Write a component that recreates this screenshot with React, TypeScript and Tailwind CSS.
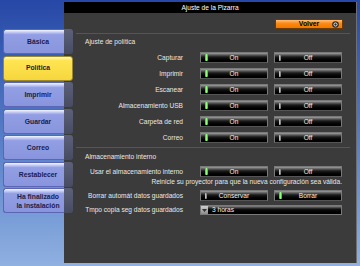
const font = { fontFamily: '"Liberation Sans", Arial, sans-serif' }

const menu = ['Básica', 'Política', 'Imprimir', 'Guardar', 'Correo', 'Restablecer']

function SideButton({ label, active }: { label: string; active?: boolean }) {
  if (active) {
    return (
      <div className="h-[25px] w-[70px] rounded-[3px] border border-[#9c8a2c] bg-linear-to-b from-[#fff8c0] via-[#ffe552] via-15% to-[#f6d63c] flex items-center justify-center text-[6.8px] font-bold text-[#1c1c3c] leading-[8px]">
        {label}
      </div>
    )
  }
  return (
    <div className="relative h-[25px] w-[70px] flex">
      <div className="w-[61px] rounded-l-[3px] border border-r-0 border-[#5a66b4] bg-linear-to-b from-[#f4f6ff] via-[#939fe4] via-20% to-[#8894dc]" />
      <div className="w-[9px] rounded-r-[3px] bg-linear-to-b from-[#5c607a] to-[#484c62]" />
      <div className="absolute inset-0 flex items-center justify-center text-center whitespace-pre-line text-[6.8px] font-bold text-[#1c1c4c] leading-[9px]">
        {label}
      </div>
    </div>
  )
}

function Toggle({ label, lit }: { label: string; lit?: boolean }) {
  return (
    <div className="relative h-[11px] w-[68px] border border-[#7a7a7a] border-b-[#555] bg-linear-to-b from-[#a0a0a0] via-[#1a1a1a] via-45% to-black flex items-center justify-center">
      {lit ? (
        <div className="absolute left-[4px] top-[1px] h-[7px] w-[3px] rounded-[1px] bg-linear-to-r from-[#2fbf2f] via-[#8dff7a] to-[#22b322]" />
      ) : (
        <div className="absolute left-[4px] top-[2px] h-[6px] w-[2px] rounded-[1px] bg-[#8a8a8a] border-l border-[#c0c0c0]" />
      )}
      <span className="text-[6.6px] leading-[8px] text-[#f0f0f0]">{label}</span>
    </div>
  )
}

function Row({ label, a, b, litA }: { label: string; a: string; b: string; litA: boolean }) {
  return (
    <div className="flex items-center h-[11px]">
      <div className="w-[107px] text-right text-[6.6px] leading-[8px] text-[#e8e8e8] whitespace-nowrap">{label}</div>
      <div className="ml-[17px] flex gap-[6px]">
        <Toggle label={a} lit={litA} />
        <Toggle label={b} lit={!litA} />
      </div>
    </div>
  )
}

export default function App() {
  const policies = ['Capturar', 'Imprimir', 'Escanear', 'Almacenamiento USB', 'Carpeta de red', 'Correo']

  return (
    <div style={font} className="w-[360px] h-[266px] flex pt-[2px] bg-linear-to-b from-[#2748a6] via-[#5f86cc] via-60% to-[#8fb0e0] overflow-hidden">
      {/* Sidebar */}
      <div className="relative z-10 w-[73px] shrink-0 pl-[3px] pt-[27px] flex flex-col gap-[1.5px]">
        {menu.map((m) => (
          <SideButton key={m} label={m} active={m === 'Política'} />
        ))}
        <SideButton label={'Ha finalizado\nla instalación'} />
      </div>

      {/* Main panel */}
      <div className="-ml-[9px] w-[293px] h-[261px] shrink-0 bg-[#3b3b3b] border-r border-[#707070] flex flex-col">
        <div className="h-[11px] bg-black flex items-center justify-center text-[6.6px] leading-[8px] text-white">
          Ajuste de la Pizarra
        </div>

        <div className="mt-[6px] flex justify-end pr-[13px]">
          <div className="relative h-[10px] w-[68px] border border-[#6a3a00] bg-linear-to-b from-[#ffc070] via-[#ff8a10] via-40% to-[#f07800] flex items-center justify-center">
            <span className="text-[6.8px] leading-[8px] font-bold text-black">Volver</span>
            <svg className="absolute right-[3px] top-[1px]" width="7" height="7" viewBox="0 0 7 7">
              <circle cx="3.5" cy="3.5" r="3.3" fill="#2a2a2a" />
              <circle cx="3.5" cy="3.5" r="1.6" fill="none" stroke="#e8e8e8" strokeWidth="1" />
            </svg>
          </div>
        </div>

        <div className="pl-[12px] pr-[6px] flex flex-col">
          <div className="mt-[4px] h-px bg-[#555]" />
          <div className="mt-[4px] pl-[9px] text-[6.6px] leading-[8px] text-[#e8e8e8]">Ajuste de política</div>
          <div className="mt-[6px] flex flex-col gap-[5px]">
            {policies.map((p) => (
              <Row key={p} label={p} a="On" b="Off" litA />
            ))}
          </div>

          <div className="mt-[4px] h-px bg-[#555]" />
          <div className="mt-[5px] pl-[9px] text-[6.6px] leading-[8px] text-[#e8e8e8]">Almacenamiento interno</div>
          <div className="mt-[5px]">
            <Row label="Usar el almacenamiento interno" a="On" b="Off" litA />
          </div>
          <div className="mt-[1px] w-[266px] text-right text-[6.6px] leading-[8px] text-[#e8e8e8] whitespace-nowrap">
            Reinicie su proyector para que la nueva configuración sea válida.
          </div>
          <div className="mt-[4px]">
            <Row label="Borrar automát datos guardados" a="Conservar" b="Borrar" litA={false} />
          </div>
          <div className="mt-[4px] flex items-center h-[10px]">
            <div className="w-[107px] text-right text-[6.6px] leading-[8px] text-[#e8e8e8] whitespace-nowrap">
              Tmpo copia seg datos guardados
            </div>
            <div className="ml-[17px] h-[10px] w-[142px] border border-[#7a7a7a] bg-linear-to-b from-[#8a8a8a] via-[#111] via-40% to-black flex items-center">
              <div className="h-[8px] w-[7px] bg-linear-to-b from-[#d0d0d0] to-[#8c8c8c] flex items-center justify-center">
                <svg width="5" height="3" viewBox="0 0 5 3">
                  <path d="M0 0 L5 0 L2.5 3 Z" fill="#333" />
                </svg>
              </div>
              <span className="ml-[4px] text-[6.6px] leading-[8px] text-[#f0f0f0]">3 horas</span>
            </div>
          </div>
        </div>
      </div>
    </div>
  )
}
